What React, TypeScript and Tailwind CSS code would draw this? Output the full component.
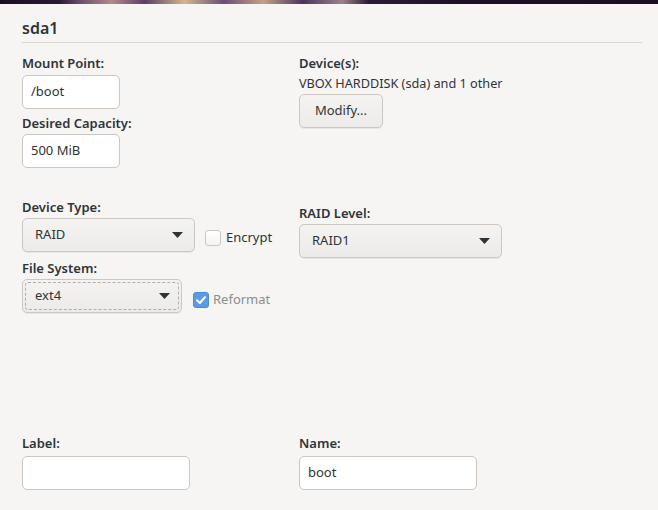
import React from "react";

const font = { fontFamily: '"Noto Sans", "Open Sans", sans-serif' };

function Arrow() {
  return (
    <svg width="11" height="6" viewBox="0 0 11 6" className="shrink-0">
      <path d="M0 0 L11 0 L5.5 6 Z" fill="#2e3436" />
    </svg>
  );
}

function Label({ children }: { children: React.ReactNode }) {
  return <div className="text-[13px] leading-[17px] font-semibold text-[#2e3436]">{children}</div>;
}

function Entry({ value, w }: { value: string; w: string }) {
  return (
    <div className={`${w} h-[34px] rounded-[5px] border border-[#cdc7c2] bg-white flex items-center px-[8px] text-[13px] text-[#2e3436]`}>
      {value}
    </div>
  );
}

function Combo({ value, w, focus }: { value: string; w: string; focus?: boolean }) {
  return (
    <div className={`${w} h-[34px] rounded-[5px] border border-[#cdc7c2] bg-gradient-to-b from-[#f4f3f2] to-[#edebe9] shadow-[0_1px_0_rgba(0,0,0,0.06)] p-[2px] flex`}>
      <div className={`flex-1 flex items-center justify-between pl-[9px] pr-[8px] rounded-[3px] ${focus ? "border border-dashed border-[#b0aeab]" : "border border-transparent"}`}>
        <span className="text-[13px] text-[#2e3436]">{value}</span>
        <Arrow />
      </div>
    </div>
  );
}

export default function App() {
  return (
    <div style={font} className="w-[658px] h-[510px] bg-[#f6f5f4] overflow-hidden flex flex-col text-[#2e3436]">
      <div className="h-[4px] w-full bg-[linear-gradient(90deg,#1a0f22_0%,#2a1a35_9%,#6b4a6e_12%,#b48a8a_17%,#5a3e66_22%,#d6b48e_28%,#6a4e78_34%,#c79f86_40%,#4a3560_46%,#a17f88_52%,#2c1c3a_56%,#1c1026_70%,#1a0f22_100%)]" />
      <div className="pl-[22px] pr-[16px] flex flex-col">
        <div className="pt-[14px] h-[38px] text-[16px] leading-[20px] font-semibold">sda1</div>
        <div className="h-px bg-[#d8d4d0]" />
      </div>

      <div className="pl-[22px] pr-[16px] grid grid-cols-[277px_1fr] mt-[12px]">
        <div className="flex flex-col">
          <Label>Mount Point:</Label>
          <div className="mt-[3px]"><Entry value="/boot" w="w-[98px]" /></div>
          <div className="mt-[6px]"><Label>Desired Capacity:</Label></div>
          <div className="mt-[2px]"><Entry value="500 MiB" w="w-[98px]" /></div>
        </div>
        <div className="flex flex-col">
          <Label>Device(s):</Label>
          <div className="text-[12.7px] leading-[17px] mt-[3px]">VBOX HARDDISK (sda) and 1 other</div>
          <div className="mt-[2px] w-[84px] h-[34px] rounded-[5px] border border-[#cdc7c2] bg-gradient-to-b from-[#f4f3f2] to-[#edebe9] shadow-[0_1px_0_rgba(0,0,0,0.06)] flex items-center justify-center text-[13px]">
            Modify...
          </div>
        </div>
      </div>

      <div className="pl-[22px] pr-[16px] grid grid-cols-[277px_1fr] mt-[31px]">
        <div className="flex flex-col">
          <Label>Device Type:</Label>
          <div className="mt-[2px] flex items-center">
            <Combo value="RAID" w="w-[173px]" />
            <div className="ml-[10px] flex items-center mt-[5px]">
              <div className="w-[16px] h-[16px] rounded-[3px] border border-[#cdc7c2] bg-gradient-to-b from-white to-[#f4f3f2]" />
              <span className="ml-[5px] text-[13px]">Encrypt</span>
            </div>
          </div>
          <div className="mt-[8px]"><Label>File System:</Label></div>
          <div className="mt-[2px] flex items-center">
            <Combo value="ext4" w="w-[160px]" focus />
            <div className="ml-[11px] flex items-center mt-[7px]">
              <div className="w-[16px] h-[16px] rounded-[3px] bg-[#5b9be6] border border-[#4a8ad8] flex items-center justify-center">
                <svg width="12" height="12" viewBox="0 0 12 12">
                  <path d="M2 6.3 L4.8 9 L10 3.2" stroke="white" strokeWidth="2" fill="none" strokeLinecap="round" strokeLinejoin="round" />
                </svg>
              </div>
              <span className="ml-[4px] text-[13px] text-[#8b8e8f]">Reformat</span>
            </div>
          </div>
        </div>
        <div className="flex flex-col pt-[6px]">
          <Label>RAID Level:</Label>
          <div className="mt-[2px]"><Combo value="RAID1" w="w-[203px]" /></div>
        </div>
      </div>

      <div className="pl-[22px] pr-[16px] grid grid-cols-[277px_1fr] mt-[122px]">
        <div className="flex flex-col">
          <Label>Label:</Label>
          <div className="mt-[4px]"><Entry value="" w="w-[168px]" /></div>
        </div>
        <div className="flex flex-col">
          <Label>Name:</Label>
          <div className="mt-[4px]"><Entry value="boot" w="w-[178px]" /></div>
        </div>
      </div>
    </div>
  );
}
